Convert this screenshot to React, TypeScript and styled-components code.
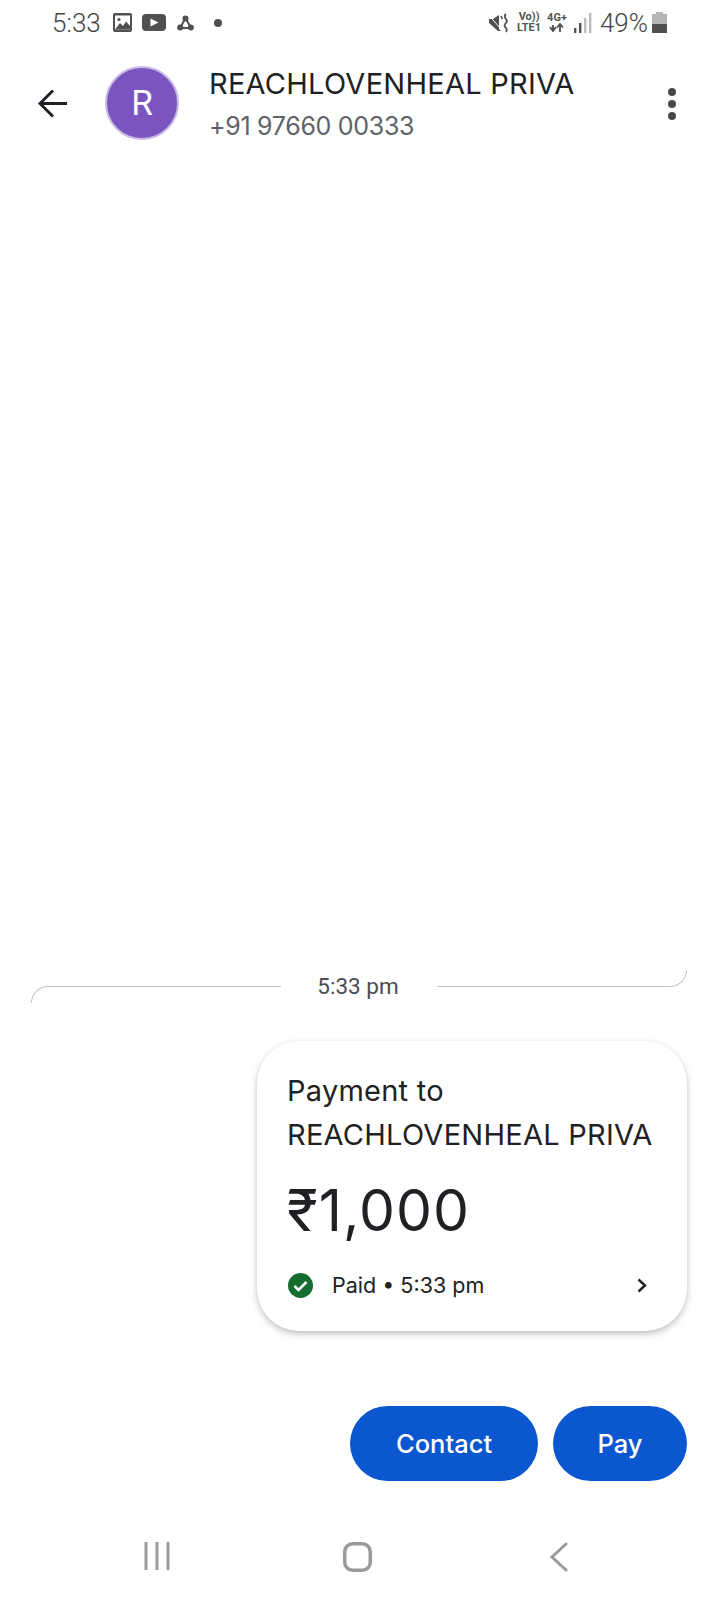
import React from "react";
import styled, { createGlobalStyle } from "styled-components";

const Global = createGlobalStyle`
  html, body { margin: 0; padding: 0; background: #fff; }
  body { font-family: Inter, Roboto, "Noto Sans", sans-serif; }
  * { box-sizing: border-box; }
`;

const Screen = styled.div`
  width: 717px;
  height: 1600px;
  display: flex;
  flex-direction: column;
  background: #fff;
  overflow: hidden;
`;

const StatusBar = styled.div`
  height: 44px;
  display: flex;
  align-items: center;
  padding: 1px 50px 0 52px;
  color: #555;
`;
const StatusText = styled.span`
  font-family: Roboto, sans-serif;
  font-size: 26px;
  font-weight: 300;
  line-height: 44px;
  color: #444;
`;
const LeftIcons = styled.div`
  display: flex;
  align-items: center;
  margin-left: 12px;
  gap: 10px;
`;
const NotifDot = styled.span`
  width: 8px;
  height: 8px;
  border-radius: 50%;
  background: #505050;
  margin-left: 20px;
`;
const RightIcons = styled.div`
  margin-left: auto;
  display: flex;
  align-items: center;
`;
const TinyStack = styled.div<{ $ml: number }>`
  display: flex;
  flex-direction: column;
  align-items: center;
  margin-left: ${(p) => p.$ml}px;
  font-family: Roboto, sans-serif;
  font-size: 11px;
  line-height: 10.5px;
  font-weight: 700;
  color: #555;
`;
const BatteryLabel = styled(StatusText)`
  margin-left: 8px;
`;
const BatteryIcon = styled.div`
  margin-left: 4px;
  display: flex;
`;

const Header = styled.div`
  height: 100px;
  display: flex;
  align-items: flex-start;
  padding: 22px 0 0 38px;
`;
const BackButton = styled.div`
  width: 29px;
  height: 29px;
  margin-top: 23px;
  display: flex;
`;
const Avatar = styled.div`
  width: 74px;
  height: 74px;
  margin-left: 38px;
  border-radius: 50%;
  background: #7a55bf;
  border: 2px solid #c9b8e6;
  color: #fff;
  font-family: Roboto, sans-serif;
  font-size: 35px;
  display: flex;
  align-items: center;
  justify-content: center;
`;
const HeaderText = styled.div`
  margin-left: 30px;
  margin-top: -1px;
  display: flex;
  flex-direction: column;
`;
const Title = styled.div`
  font-size: 29px;
  line-height: 38px;
  letter-spacing: 0.25px;
  color: #202124;
  white-space: nowrap;
`;
const Phone = styled.div`
  font-size: 25px;
  line-height: 36px;
  margin-top: 5px;
  letter-spacing: -0.3px;
  color: #5f6368;
`;
const Kebab = styled.div`
  margin: 22px 0 0 auto;
  padding-right: 41px;
  display: flex;
  flex-direction: column;
  gap: 4px;
`;
const KebabDot = styled.span`
  width: 8px;
  height: 8px;
  border-radius: 50%;
  background: #46484b;
`;

const Feed = styled.div`
  flex: 1;
  display: flex;
  flex-direction: column;
  justify-content: flex-end;
  padding: 0 30px 0 31px;
`;
const TimeRow = styled.div`
  display: flex;
  align-items: center;
  height: 36px;
  margin-bottom: 1px;
`;
const RuleLeft = styled.div`
  flex: 1;
  height: 17px;
  margin-top: 16px;
  border-top: 1.5px solid #c4c4c4;
  border-left: 1.5px solid #c4c4c4;
  border-top-left-radius: 18px;
`;
const RuleRight = styled.div`
  flex: 1;
  height: 17px;
  margin-top: -16px;
  border-bottom: 1.5px solid #c4c4c4;
  border-right: 1.5px solid #c4c4c4;
  border-bottom-right-radius: 18px;
`;
const TimeLabel = styled.div`
  width: 156px;
  text-align: center;
  font-family: Roboto, sans-serif;
  font-size: 22.5px;
  color: #4a4d50;
  padding-right: 2px;
`;
const Card = styled.div`
  align-self: flex-end;
  width: 430px;
  height: 290px;
  margin-top: 36px;
  border-radius: 42px;
  background: #fff;
  padding: 28px 40px 0 30px;
  box-shadow: 0 3px 6px rgba(60, 64, 67, 0.32), 0 0 3px rgba(60, 64, 67, 0.04);
  color: #202124;
`;
const CardLine = styled.div`
  font-size: 29px;
  line-height: 44px;
  letter-spacing: 0.25px;
  white-space: nowrap;
`;
const Amount = styled.div`
  font-size: 57px;
  line-height: 66px;
  margin-top: 21px;
  letter-spacing: 1px;
  color: #202124;
`;
const PaidRow = styled.div`
  display: flex;
  align-items: center;
  margin-top: 26px;
  padding-left: 1px;
`;
const PaidText = styled.span`
  font-size: 21.5px;
  line-height: 30px;
  margin-left: 19px;
`;
const Chevron = styled.div`
  margin-left: auto;
  display: flex;
`;
const Actions = styled.div`
  align-self: flex-end;
  display: flex;
  gap: 15px;
  margin-top: 75px;
`;
const Action = styled.div<{ $w: number }>`
  width: ${(p) => p.$w}px;
  height: 75px;
  border-radius: 38px;
  background: #0b57d0;
  color: #fff;
  font-size: 25.5px;
  font-weight: 500;
  display: flex;
  align-items: center;
  justify-content: center;
`;
const NavBar = styled.div`
  height: 119px;
  display: grid;
  grid-template-columns: 144px 26px 173px 29px 178px 18px;
  padding-top: 61px;
  align-items: start;
`;
const NavCell = styled.div<{ $col: number }>`
  grid-column: ${(p) => p.$col};
  display: flex;
`;

export default function App() {
  return (
    <Screen>
      <Global />
      <StatusBar>
        <StatusText>5:33</StatusText>
        <LeftIcons>
          <svg width="19" height="19" viewBox="0 0 19 19">
            <rect width="19" height="19" rx="2" fill="#505050" />
            <rect x="2" y="2.5" width="15" height="14" fill="#fff" />
            <circle cx="6" cy="6.5" r="1.6" fill="#505050" />
            <path d="M2 16.5 L7 10 L10 13 L13 8.5 L17 13 V16.5Z" fill="#505050" />
          </svg>
          <svg width="24" height="17" viewBox="0 0 24 17">
            <rect width="24" height="17" rx="4" fill="#505050" />
            <path d="M8.5 4.5 L16.5 8.5 L8.5 12.5Z" fill="#fff" />
          </svg>
          <svg width="17" height="16" viewBox="0 0 17 16" style={{ marginLeft: 1 }}>
            <path d="M8.5 3 L3 13 H14Z" fill="none" stroke="#505050" strokeWidth="2" />
            <circle cx="8.5" cy="3.4" r="3" fill="#505050" />
            <circle cx="3.2" cy="12.6" r="3" fill="#505050" />
            <circle cx="13.8" cy="12.6" r="3" fill="#505050" />
          </svg>
        </LeftIcons>
        <NotifDot />
        <RightIcons>
          <svg width="20" height="20" viewBox="0 0 20 20">
            <path d="M0 6 H4 L10 2 V17 L0 8Z M0 6 L12 18 H9 L0 10Z" fill="#505050" />
            <path d="M0.5 3 L12 16" stroke="#fff" strokeWidth="1" />
            <path d="M12 3 L13.5 6" stroke="#505050" strokeWidth="1.6" />
            <path d="M17 1 Q14.5 3.5 17 6 Q19 8.5 16.5 10.5 Q14.5 13 17 15 Q18.5 17 17 19" fill="none" stroke="#505050" strokeWidth="1.8" />
          </svg>
          <TinyStack $ml={8}>
            <span>Vo))</span>
            <span>LTE1</span>
          </TinyStack>
          <TinyStack $ml={6}>
            <span>4G+</span>
            <svg width="16" height="9" viewBox="0 0 16 9">
              <path d="M4 9 V3 M1 5 L4 9 L7 5" fill="none" stroke="#505050" strokeWidth="1.8" transform="translate(0 -1)" />
              <path d="M11 1 V9 M8 4.5 L11 1 L14 4.5" fill="none" stroke="#505050" strokeWidth="1.8" />
            </svg>
          </TinyStack>
          <svg width="18" height="20" viewBox="0 0 18 20" style={{ marginLeft: 7 }}>
            <rect x="0" y="15" width="2.4" height="5" fill="#505050" />
            <rect x="5" y="10" width="2.4" height="10" fill="#505050" />
            <rect x="10" y="5" width="2.4" height="15" fill="#bdbdbd" />
            <rect x="15" y="0" width="2.4" height="20" fill="#bdbdbd" />
          </svg>
          <BatteryLabel>49%</BatteryLabel>
          <BatteryIcon>
            <svg width="15" height="21" viewBox="0 0 15 21">
              <rect x="4" y="0" width="7" height="3" fill="#b5b5b5" />
              <rect x="0" y="2" width="15" height="10" fill="#b5b5b5" />
              <rect x="0" y="12" width="15" height="9" fill="#505050" />
            </svg>
          </BatteryIcon>
        </RightIcons>
      </StatusBar>

      <Header>
        <BackButton>
          <svg width="29" height="29" viewBox="0 0 29 29">
            <path d="M29 14.5 H2 M15 1.5 L2 14.5 L15 27.5" fill="none" stroke="#202124" strokeWidth="3" />
          </svg>
        </BackButton>
        <Avatar>R</Avatar>
        <HeaderText>
          <Title>REACHLOVENHEAL PRIVA</Title>
          <Phone>+91 97660 00333</Phone>
        </HeaderText>
        <Kebab>
          <KebabDot />
          <KebabDot />
          <KebabDot />
        </Kebab>
      </Header>

      <Feed>
        <TimeRow>
          <RuleLeft />
          <TimeLabel>5:33 pm</TimeLabel>
          <RuleRight />
        </TimeRow>
        <Card>
          <CardLine>Payment to</CardLine>
          <CardLine>REACHLOVENHEAL PRIVA</CardLine>
          <Amount>₹1,000</Amount>
          <PaidRow>
            <svg width="25" height="25" viewBox="0 0 25 25">
              <circle cx="12.5" cy="12.5" r="12.5" fill="#146c2e" />
              <path d="M6.5 13 L10.5 17 L18.5 9" fill="none" stroke="#fff" strokeWidth="2.6" />
            </svg>
            <PaidText>Paid • 5:33 pm</PaidText>
            <Chevron>
              <svg width="10" height="15" viewBox="0 0 10 15">
                <path d="M1.5 1.5 L8 7.5 L1.5 13.5" fill="none" stroke="#202124" strokeWidth="2.4" />
              </svg>
            </Chevron>
          </PaidRow>
        </Card>
        <Actions>
          <Action $w={188}>Contact</Action>
          <Action $w={134}>Pay</Action>
        </Actions>
      </Feed>

      <NavBar>
        <NavCell $col={2}>
          <svg width="26" height="28" viewBox="0 0 26 28">
            <path d="M2 1 V27 M13 1 V27 M24 1 V27" stroke="#9a9a9a" strokeWidth="3" strokeLinecap="round" />
          </svg>
        </NavCell>
        <NavCell $col={4}>
          <svg width="29" height="30" viewBox="0 0 29 30">
            <rect x="1.75" y="1.75" width="25.5" height="26.5" rx="8" fill="none" stroke="#9a9a9a" strokeWidth="3.5" />
          </svg>
        </NavCell>
        <NavCell $col={6}>
          <svg width="18" height="30" viewBox="0 0 18 30">
            <path d="M16 2 L2 15 L16 28" fill="none" stroke="#9a9a9a" strokeWidth="3" strokeLinecap="round" />
          </svg>
        </NavCell>
      </NavBar>
    </Screen>
  );
}
